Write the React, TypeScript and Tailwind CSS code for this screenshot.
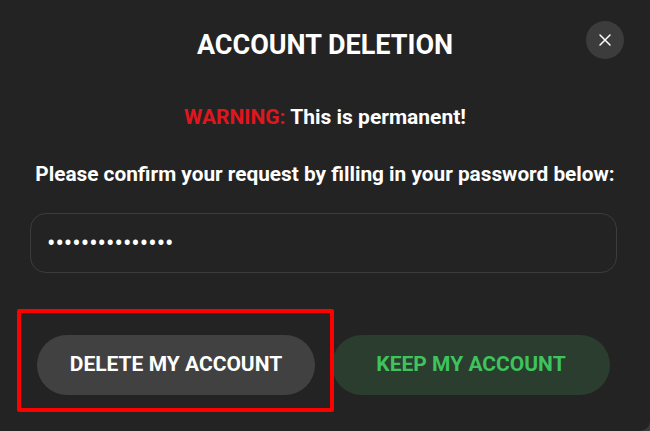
import React from 'react';

const CloseIcon = () => (
  <svg width="14" height="14" viewBox="0 0 14 14" fill="none">
    <path d="M2 2L12 12M12 2L2 12" stroke="white" strokeWidth="1.5" strokeLinecap="round"/>
  </svg>
);

const App = () => {
  return (
    <div className="w-[650px] h-[431px] bg-[#3a3a3a] overflow-hidden" style={{fontFamily: 'Roboto, "Liberation Sans", sans-serif'}}>
      <div className="relative w-full h-full bg-[#232323] rounded-br-[10px] flex flex-col text-white">
        <button className="absolute right-[26px] top-[21px] w-[38px] h-[38px] rounded-full bg-[#3c3c3c] flex items-center justify-center">
          <CloseIcon/>
        </button>

        <h1 className="mt-[29px] text-center text-[27px] font-bold leading-[32px]">ACCOUNT DELETION</h1>

        <p className="mt-[43px] text-center text-[21px] font-bold leading-[26px]">
          <span className="text-[#e0161e]">WARNING:</span> This is permanent!
        </p>

        <p className="mt-[31px] text-center text-[20.8px] font-bold leading-[26px]">
          Please confirm your request by filling in your password below:
        </p>

        <div className="mt-[26px] ml-[30px] mr-[33px]">
          <input
            type="password"
            readOnly
            value="aaaaaaaaaaaaaaa"
            className="w-full h-[60px] rounded-[16px] border border-[#3c3c3c] bg-transparent px-[16px] text-[25px] text-white outline-none"
          />
        </div>

        <div className="mt-[62px] ml-[37px] mr-[40px] grid grid-cols-2 gap-[17px]">
          <div className="relative">
            <div className="absolute left-[-20px] right-[-19px] top-[-26px] bottom-[-17px] border-[4px] border-[#ff0000] rounded-[2px] pointer-events-none"/>
            <button className="w-full h-[60px] rounded-full bg-[#414141] text-white text-[21px] font-bold">
              DELETE MY ACCOUNT
            </button>
          </div>
          <button className="w-full h-[60px] rounded-full bg-[#2a3d2e] text-[#3ec35d] text-[21px] font-bold">
            KEEP MY ACCOUNT
          </button>
        </div>
      </div>
    </div>
  );
};

export default App;
